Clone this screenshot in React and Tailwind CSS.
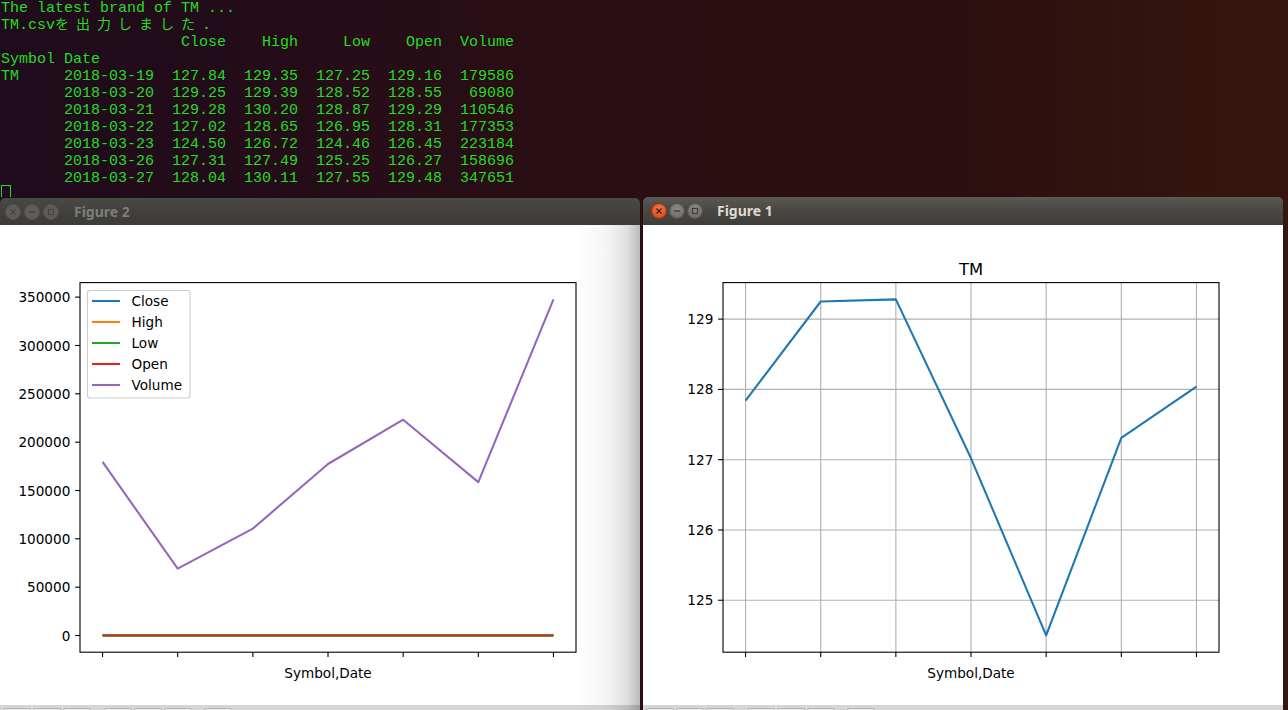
import React from 'react';

const FONT = "'DejaVu Sans', 'Liberation Sans', sans-serif";

function TitleBar({ title, active }) {
  return (
    <div
      className={
        active
          ? 'h-[28px] rounded-t-[5px] flex items-center pl-[8px] bg-[linear-gradient(180deg,#5b5953_0%,#4a4843_45%,#3e3d39_100%)]'
          : 'h-[27px] rounded-t-[5px] flex items-center pl-[5px] bg-[linear-gradient(180deg,#4a4944_0%,#42413d_45%,#3c3b37_100%)]'
      }
    >
      <div className={active ? 'flex items-center gap-[2px]' : 'flex items-center gap-[3px]'}>
        <div
          className={
            active
              ? 'w-[16px] h-[16px] rounded-full flex items-center justify-center bg-[radial-gradient(circle_at_50%_35%,#f4784a_0%,#e2552a_60%,#c64118_100%)] border border-[#9c3414]'
              : 'w-[16px] h-[16px] rounded-full flex items-center justify-center bg-[#5d5c57] border border-[#52514c]'
          }
        >
          <svg width="8" height="8" viewBox="0 0 8 8">
            <path d="M1.5 1.5 L6.5 6.5 M6.5 1.5 L1.5 6.5" stroke={active ? '#3b1a10' : '#45443f'} strokeWidth="1.2" />
          </svg>
        </div>
        <div
          className={
            active
              ? 'w-[16px] h-[16px] rounded-full flex items-center justify-center bg-[radial-gradient(circle_at_50%_35%,#8d8b84_0%,#75736d_60%,#65635e_100%)] border border-[#55544f]'
              : 'w-[16px] h-[16px] rounded-full flex items-center justify-center bg-[#5d5c57] border border-[#52514c]'
          }
        >
          <svg width="8" height="8" viewBox="0 0 8 8">
            <path d="M1 4 L7 4" stroke={active ? '#3c3b37' : '#45443f'} strokeWidth="1.3" />
          </svg>
        </div>
        <div
          className={
            active
              ? 'w-[16px] h-[16px] rounded-full flex items-center justify-center bg-[radial-gradient(circle_at_50%_35%,#8d8b84_0%,#75736d_60%,#65635e_100%)] border border-[#55544f]'
              : 'w-[16px] h-[16px] rounded-full flex items-center justify-center bg-[#5d5c57] border border-[#52514c]'
          }
        >
          <svg width="8" height="8" viewBox="0 0 8 8">
            <rect x="1.5" y="1.5" width="5" height="5" fill="none" stroke={active ? '#3c3b37' : '#45443f'} strokeWidth="1.1" />
          </svg>
        </div>
      </div>
      <span
        className={
          active
            ? "ml-[14px] text-[14px] font-bold text-[#dfdbd2] font-['Noto_Sans',sans-serif] leading-none"
            : "ml-[15px] text-[14px] font-bold text-[#7e7d78] font-['Noto_Sans',sans-serif] leading-none"
        }
      >
        {title}
      </span>
    </div>
  );
}

function ToolBtn() {
  return <div className="w-[28px] h-[28px] shrink-0 rounded-[2px] border border-[#b3b3b3] bg-[#ececec]" />;
}

function Toolbar() {
  return (
    <div className="h-[40px] bg-[#d6d6d6] flex items-start pt-[3px] pl-[3px]">
      <div className="flex gap-[2px]">
        <ToolBtn />
        <ToolBtn />
        <ToolBtn />
      </div>
      <div className="w-[1px] h-[20px] mt-[4px] mx-[6px] bg-[#b8b8b8]" />
      <div className="flex gap-[2px]">
        <ToolBtn />
        <ToolBtn />
        <ToolBtn />
      </div>
      <div className="w-[1px] h-[20px] mt-[4px] ml-[6px] mr-[5px] bg-[#b8b8b8]" />
      <ToolBtn />
    </div>
  );
}

const XS = [0, 1, 2, 3, 4, 5, 6].map((i) => 102.55 + 75.152 * i);
const AX = { l: 80, r: 576, t: 57.6, b: 427.2 };

function Axes({ children, yticks, grid }) {
  return (
    <>
      {grid &&
        XS.map((x, i) => (
          <line key={'gx' + i} x1={x} x2={x} y1={AX.t} y2={AX.b} stroke="#b0b0b0" strokeWidth="1.1" />
        ))}
      {grid &&
        yticks.map(([, y], i) => (
          <line key={'gy' + i} x1={AX.l} x2={AX.r} y1={y} y2={y} stroke="#b0b0b0" strokeWidth="1.1" />
        ))}
      {children}
      <rect x={AX.l} y={AX.t} width={AX.r - AX.l} height={AX.b - AX.t} fill="none" stroke="#000" strokeWidth="1.1" />
      {XS.map((x, i) => (
        <line key={'tx' + i} x1={x} x2={x} y1={AX.b} y2={AX.b + 4.9} stroke="#000" strokeWidth="1.1" />
      ))}
      {yticks.map(([label, y], i) => (
        <g key={'ty' + i}>
          <line x1={AX.l - 4.9} x2={AX.l} y1={y} y2={y} stroke="#000" strokeWidth="1.1" />
          <text x="70.3" y={y + 5} textAnchor="end" fontFamily={FONT} fontSize="13.6" fill="#000">
            {label}
          </text>
        </g>
      ))}
      <text x="328" y="452.5" textAnchor="middle" fontFamily={FONT} fontSize="13.6" fill="#000">
        Symbol,Date
      </text>
    </>
  );
}

function pts(ys) {
  return XS.map((x, i) => `${x},${ys[i]}`).join(' ');
}

function Fig2() {
  const yt = [
    ['0', 410.5],
    ['50000', 362.2],
    ['100000', 313.8],
    ['150000', 265.5],
    ['200000', 217.2],
    ['250000', 168.8],
    ['300000', 120.5],
    ['350000', 72.1],
  ];
  const vol = [236.9, 343.7, 303.6, 239.0, 194.7, 257.1, 74.4];
  const flat = (d) => XS.map(() => 410.4 + d);
  const legend = [
    ['Close', '#1f77b4'],
    ['High', '#ff7f0e'],
    ['Low', '#2ca02c'],
    ['Open', '#d62728'],
    ['Volume', '#9467bd'],
  ];
  return (
    <svg width="640" height="480" viewBox="0 0 640 480" className="block">
      <Axes yticks={yt}>
        <polyline points={pts(flat(0))} fill="none" stroke="#1f77b4" strokeWidth="2.08" />
        <polyline points={pts(flat(-0.1))} fill="none" stroke="#ff7f0e" strokeWidth="2.08" />
        <polyline points={pts(flat(0.1))} fill="none" stroke="#2ca02c" strokeWidth="2.08" />
        <polyline points={pts(flat(0))} fill="none" stroke="#d62728" strokeWidth="2.08" opacity="0.75" />
        <polyline points={pts(vol)} fill="none" stroke="#9467bd" strokeWidth="2.08" strokeLinejoin="round" />
      </Axes>
      <rect x="87.5" y="65.5" width="102.5" height="107.5" rx="2.5" fill="#fff" fillOpacity="0.8" stroke="#cccccc" strokeWidth="1.1" />
      {legend.map(([name, c], i) => {
        const y = 76 + 21 * i;
        return (
          <g key={name}>
            <line x1="92" x2="120" y1={y} y2={y} stroke={c} strokeWidth="2.08" />
            <text x="131.5" y={y + 5} fontFamily={FONT} fontSize="13.6" fill="#000">
              {name}
            </text>
          </g>
        );
      })}
    </svg>
  );
}

function Fig1() {
  const yt = [
    ['125', 375.25],
    ['126', 305.0],
    ['127', 234.7],
    ['128', 164.4],
    ['129', 94.1],
  ];
  const close = [175.6, 76.5, 74.4, 233.3, 410.4, 212.9, 161.6];
  return (
    <svg width="640" height="480" viewBox="0 0 640 480" className="block">
      <Axes yticks={yt} grid>
        <polyline points={pts(close)} fill="none" stroke="#1f77b4" strokeWidth="2.08" strokeLinejoin="round" />
      </Axes>
      <text x="328" y="49.5" textAnchor="middle" fontFamily={FONT} fontSize="16.4" fill="#000">
        TM
      </text>
    </svg>
  );
}

function Line({ children }) {
  return <div className="h-[17px] leading-[17px] whitespace-pre">{children}</div>;
}

function Terminal() {
  const data = [
    'TM     2018-03-19  127.84  129.35  127.25  129.16  179586',
    '       2018-03-20  129.25  129.39  128.52  128.55   69080',
    '       2018-03-21  129.28  130.20  128.87  129.29  110546',
    '       2018-03-22  127.02  128.65  126.95  128.31  177353',
    '       2018-03-23  124.50  126.72  124.46  126.45  223184',
    '       2018-03-26  127.31  127.49  125.25  126.27  158696',
    '       2018-03-27  128.04  130.11  127.55  129.48  347651',
  ];
  return (
    <div className="h-[197px] overflow-hidden pl-[1px] text-[15px] text-[#24dc24] font-['Liberation_Mono',monospace]">
      <Line>The latest brand of TM ...</Line>
      <Line>
        TM.csv
        <span className="font-['Noto_Sans_CJK_JP',sans-serif] text-[14px] tracking-[7px] leading-[10px]">を出力しました</span>.
      </Line>
      <Line>{'                    Close    High     Low    Open  Volume'}</Line>
      <Line>Symbol Date</Line>
      {data.map((d) => (
        <Line key={d}>{d}</Line>
      ))}
      <div className="w-[10px] h-[16px] mt-[-2px] border border-[#24dc24]" />
    </div>
  );
}

export default function App() {
  return (
    <div className="w-[1288px] h-[710px] overflow-hidden bg-[linear-gradient(90deg,#1f0b1c_0%,#2a0e14_45%,#2c0f10_75%,#36170d_100%)]">
      <Terminal />
      <div className="flex items-start gap-[3px]">
        <div className="w-[640px] shrink-0 relative mt-[1px]">
          <TitleBar title="Figure 2" />
          <div className="bg-white">
            <Fig2 />
          </div>
          <Toolbar />
          <div className="absolute right-0 top-[27px] w-[66px] h-[520px] bg-[linear-gradient(90deg,rgba(0,0,0,0)_0%,rgba(0,0,0,0.04)_50%,rgba(0,0,0,0.12)_80%,rgba(0,0,0,0.27)_100%)]" />
        </div>
        <div className="w-[640px] shrink-0">
          <TitleBar title="Figure 1" active />
          <div className="bg-white">
            <Fig1 />
          </div>
          <Toolbar />
        </div>
      </div>
    </div>
  );
}
